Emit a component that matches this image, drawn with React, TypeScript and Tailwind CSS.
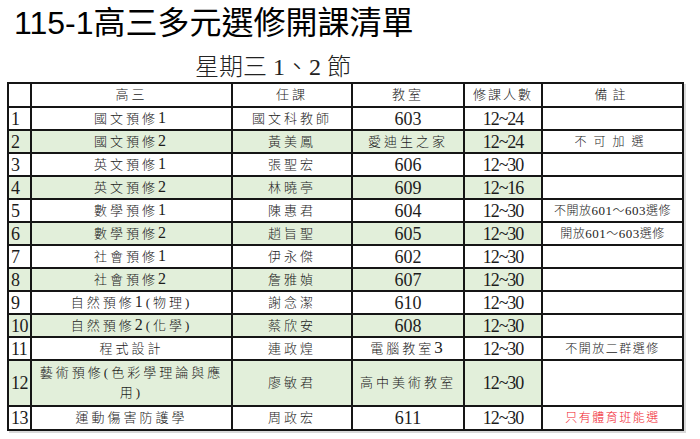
import React from 'react';

type Row = {
  no: string;
  course: React.ReactNode;
  teacher: string;
  room: string;
  count: string;
  note?: string;
  noteClass?: string;
  green?: boolean;
  tall?: boolean;
};

// wrap ascii digit runs so they sit at the bigger serif size like the sheet
const mixed = (text: string, digitSize = 'text-[16px]') =>
  text.split(/(\d+)/).map((part, i) =>
    /^\d+$/.test(part) ? (
      <span key={i} className={`${digitSize} font-['Liberation_Serif',serif]`}>
        {part}
      </span>
    ) : (
      <React.Fragment key={i}>{part}</React.Fragment>
    )
  );

const rows: Row[] = [
  { no: '1', course: '國文預修1', teacher: '國文科教師', room: '603', count: '12~24' },
  { no: '2', course: '國文預修2', teacher: '黃美鳳', room: '愛迪生之家', count: '12~24', note: '不可加選', noteClass: 'tracking-[7px]', green: true },
  { no: '3', course: '英文預修1', teacher: '張聖宏', room: '606', count: '12~30' },
  { no: '4', course: '英文預修2', teacher: '林曉亭', room: '609', count: '12~16', green: true },
  { no: '5', course: '數學預修1', teacher: '陳惠君', room: '604', count: '12~30', note: '不開放601～603選修', noteClass: 'tracking-[0.5px]' },
  { no: '6', course: '數學預修2', teacher: '趙旨聖', room: '605', count: '12~30', note: '開放601～603選修', noteClass: 'tracking-[0.5px]', green: true },
  { no: '7', course: '社會預修1', teacher: '伊永傑', room: '602', count: '12~30' },
  { no: '8', course: '社會預修2', teacher: '詹雅媜', room: '607', count: '12~30', green: true },
  { no: '9', course: '自然預修1(物理)', teacher: '謝念潔', room: '610', count: '12~30' },
  { no: '10', course: '自然預修2(化學)', teacher: '蔡欣安', room: '608', count: '12~30', green: true },
  { no: '11', course: '程式設計', teacher: '連政煌', room: '電腦教室3', count: '12~30', note: '不開放二群選修', noteClass: 'tracking-[1.5px]' },
  {
    no: '12',
    course: (
      <>
        藝術預修(色彩學理論與應
        <br />
        用)
      </>
    ),
    teacher: '廖敏君',
    room: '高中美術教室',
    count: '12~30',
    green: true,
    tall: true,
  },
  { no: '13', course: '運動傷害防護學', teacher: '周政宏', room: '611', count: '12~30', note: '只有體育班能選', noteClass: 'tracking-[1.5px] text-[#f0202a]' },
];

const cell = 'border-2 border-[#151515] p-0 text-center align-middle';

export default function App() {
  return (
    <div className="w-[700px] h-[439px] bg-white overflow-hidden text-[#1c1c1c]">
      <div className="pl-[14px] pt-[4px] h-[44px] text-[32px] leading-[38px] text-black font-['Liberation_Sans','Noto_Sans_CJK_TC',sans-serif]">
        115-1高三多元選修開課清單
      </div>
      <div className="pl-[195px] pt-[9px] h-[38px] text-[24px] leading-[28px] text-[#222] font-light font-['Liberation_Serif','Noto_Sans_CJK_TC',serif]">
        星期三 1、2 節
      </div>

      <table className="ml-[7px] table-fixed border-collapse w-[675px] shadow-[2px_2px_0_#d9d9d9] font-light font-['Liberation_Serif','Noto_Sans_CJK_TC',serif]">
        <colgroup>
          <col className="w-[23px]" />
          <col className="w-[201px]" />
          <col className="w-[120px]" />
          <col className="w-[112px]" />
          <col className="w-[78px]" />
          <col className="w-[141px]" />
        </colgroup>
        <thead>
          <tr className="h-[24px] text-[13px] leading-[16px]">
            <th className={`${cell} font-light`}></th>
            <th className={`${cell} font-light tracking-[3px]`}>高三</th>
            <th className={`${cell} font-light tracking-[3px]`}>任課</th>
            <th className={`${cell} font-light tracking-[3px]`}>教室</th>
            <th className={`${cell} font-light tracking-[2px]`}>修課人數</th>
            <th className={`${cell} font-light tracking-[5px]`}>備註</th>
          </tr>
        </thead>
        <tbody>
          {rows.map((r) => {
            const bg = r.green ? 'bg-[#e2efda]' : 'bg-white';
            const numericRoom = /^\d+$/.test(r.room);
            return (
              <tr
                key={r.no}
                className={r.tall ? 'h-[46px]' : r.no === '13' ? 'h-[24px]' : 'h-[23px]'}
              >
                <td className={`${cell} ${bg} !text-left pl-[2px] text-[18px] leading-[18px] tracking-[-0.5px] font-['Liberation_Serif',serif]`}>
                  {r.no}
                </td>
                <td className={`${cell} ${bg} text-[13px] leading-[20px] tracking-[3px]`}>
                  {typeof r.course === 'string' ? mixed(r.course) : r.course}
                </td>
                <td className={`${cell} ${bg} text-[13px] leading-[18px] tracking-[3px]`}>
                  {r.teacher}
                </td>
                <td
                  className={`${cell} ${bg} ${
                    numericRoom
                      ? "text-[18px] leading-[18px] font-['Liberation_Serif',serif]"
                      : 'text-[13px] leading-[18px] tracking-[3px]'
                  }`}
                >
                  {numericRoom ? r.room : mixed(r.room, 'text-[17px]')}
                </td>
                <td className={`${cell} ${bg} text-[18px] leading-[18px] tracking-[-1px] font-['Liberation_Serif',serif]`}>
                  {r.count}
                </td>
                <td className={`${cell} bg-white text-[12px] leading-[16px] ${r.noteClass ?? ''}`}>
                  {r.note ? mixed(r.note, 'text-[13px]') : null}
                </td>
              </tr>
            );
          })}
        </tbody>
      </table>
    </div>
  );
}
